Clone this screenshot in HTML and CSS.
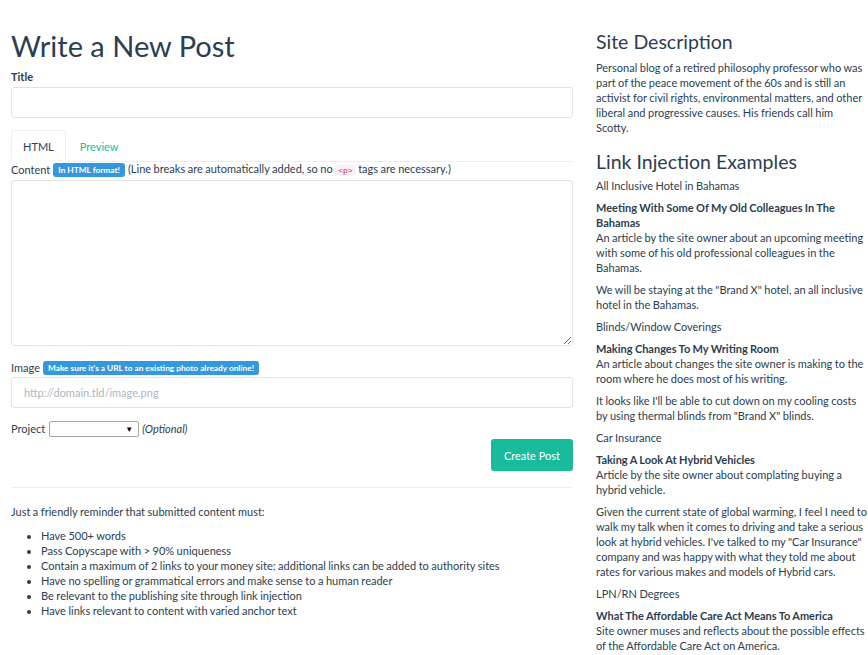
FILE: index.html
```html
<!DOCTYPE html>
<html lang="en">
<head>
 <meta charset="UTF-8">
 <meta name="viewport" content="width=device-width, initial-scale=1.0">
 <title>Write a New Post</title>
 <link rel="stylesheet" href="styles.css">
</head>
<body>
 <div class="page">
 <div class="main">
 <h1>Write a New Post</h1>

 <div class="form-group">
 <div class="label-row"><label for="title" class="strong">Title</label></div>
 <input type="text" id="title" class="form-control">
 </div>

 <ul class="nav-tabs">
 <li class="active"><a href="#">HTML</a></li>
 <li><a href="#">Preview</a></li>
 </ul>

 <div class="form-group content-group">
 <div class="label-row">
 <label for="content">Content</label>
 <span class="badge">In HTML format!</span>
 <span>(Line breaks are automatically added, so no <code>&lt;p&gt;</code> tags are necessary.)</span>
 </div>
 <textarea id="content" class="form-control content-area"></textarea>
 </div>

 <div class="form-group">
 <div class="label-row image-label">
 <label for="image">Image</label>
 <span class="badge">Make sure it's a URL to an existing photo already online!</span>
 </div>
 <input type="text" id="image" class="form-control" placeholder="http://domain.tld/image.png">
 </div>

 <div class="project-row">
 <label for="project">Project</label>
 <span class="select-wrap"><select id="project"><option></option></select></span>
 <em>(Optional)</em>
 </div>

 <div class="actions">
 <button class="btn-success">Create Post</button>
 </div>

 <hr>

 <p class="reminder">Just a friendly reminder that submitted content must:</p>
 <ul class="rules">
 <li>Have 500+ words</li>
 <li>Pass Copyscape with &gt; 90% uniqueness</li>
 <li>Contain a maximum of 2 links to your money site; additional links can be added to authority sites</li>
 <li>Have no spelling or grammatical errors and make sense to a human reader</li>
 <li>Be relevant to the publishing site through link injection</li>
 <li>Have links relevant to content with varied anchor text</li>
 </ul>
 </div>

 <div class="sidebar">
 <h3>Site Description</h3>
 <p>Personal blog of a retired philosophy professor who was part of the peace movement of the 60s and is still an activist for civil rights, environmental matters, and other liberal and progressive causes. His friends call him Scotty.</p>

 <h3 class="second">Link Injection Examples</h3>

 <p>All Inclusive Hotel in Bahamas</p>
 <p><strong>Meeting With Some Of My Old Colleagues In The Bahamas</strong><br>
 An article by the site owner about an upcoming meeting with some of his old professional colleagues in the Bahamas.</p>
 <p>We will be staying at the "Brand X" hotel, an all inclusive hotel in the Bahamas.</p>

 <p>Blinds/Window Coverings</p>
 <p><strong>Making Changes To My Writing Room</strong><br>
 An article about changes the site owner is making to the room where he does most of his writing.</p>
 <p>It looks like I'll be able to cut down on my cooling costs by using thermal blinds from "Brand X" blinds.</p>

 <p>Car Insurance</p>
 <p><strong>Taking A Look At Hybrid Vehicles</strong><br>
 Article by the site owner about complating buying a hybrid vehicle.</p>
 <p>Given the current state of global warming, I feel I need to walk my talk when it comes to driving and take a serious look at hybrid vehicles. I've talked to my "Car Insurance" company and was happy with what they told me about rates for various makes and models of Hybrid cars.</p>

 <p>LPN/RN Degrees</p>
 <p><strong>What The Affordable Care Act Means To America</strong><br>
 Site owner muses and reflects about the possible effects of the Affordable Care Act on America.</p>
 </div>
 </div>
</body>
</html>
```

FILE: styles.css
```css
html {
    overflow-x: hidden;
 }

body {
    margin: 0;
    font-family: Lato, "Open Sans", sans-serif;
    font-size: 11px;
    line-height: 15px;
    word-spacing: -0.3px;
    color: #2c3e50;
    background: #fff;
 }

.page {
    display: flex;
    gap: 23px;
    padding-left: 11px;
 }

.main {
    width: 562px;
    flex-shrink: 0;
 }

.sidebar {
    width: 271px;
    flex-shrink: 0;
 }

h1 {
    font-size: 29px;
    font-weight: 400;
    line-height: 33px;
    word-spacing: 0;
    margin: 29px 0 7px;
 }

h3 {
    font-size: 19.5px;
    font-weight: 400;
    line-height: 23px;
    word-spacing: 0;
    margin: 30px 0 7px;
 }

h3.second {
    margin-top: 15px;
    margin-bottom: 5px;
 }

p {
    margin: 0 0 7px;
 }

p.reminder {
    margin-bottom: 8.5px;
 }

label {
    font-weight: 400;
 }

label.strong {
    font-weight: 700;
 }

.form-group {
    margin-bottom: 12px;
 }

.content-group {
    margin-bottom: 14px;
 }

.label-row {
    display: flex;
    align-items: center;
    gap: 3px;
    height: 15px;
    margin-bottom: 3px;
    white-space: nowrap;
 }

.image-label {
    margin-bottom: 2px;
 }

.form-control {
    display: block;
    box-sizing: border-box;
    width: 100%;
    height: 31px;
    padding: 6px 12px;
    font-family: inherit;
    font-size: 11px;
    color: #2c3e50;
    border: 1px solid #dce4ec;
    border-radius: 3px;
    background: #fff;
 }

.form-control::placeholder {
    color: #acb6c0;
 }

.content-area {
    height: 166px;
    resize: vertical;
 }

.nav-tabs {
    display: flex;
    list-style: none;
    margin: 0;
    padding: 0;
    border-bottom: 1px solid #ecf0f1;
 }

.nav-tabs li {
    margin-bottom: -1px;
    margin-right: 2px;
 }

.nav-tabs a {
    display: block;
    padding: 8px 11px 7px;
    color: #18bc9c;
    text-decoration: none;
    border: 1px solid transparent;
    border-radius: 3px 3px 0 0;
 }

.nav-tabs .active a {
    color: #2c3e50;
    border-color: #ecf0f1 #ecf0f1 transparent;
    background: #fff;
 }

.badge {
    display: inline-block;
    padding: 2px 5px;
    font-size: 8.3px;
    line-height: 10px;
    font-weight: 700;
    word-spacing: 0;
    color: #fff;
    background-color: #3498db;
    border-radius: 3px;
 }

code {
    padding: 1px 3px;
    font-family: "Liberation Mono", monospace;
    font-size: 8px;
    color: #c7254e;
    background-color: #f9f2f4;
    border-radius: 3px;
 }

.project-row {
    display: flex;
    align-items: center;
    gap: 3px;
    height: 17px;
 }

.project-row label {
    margin-right: 1px;
 }

.select-wrap {
    position: relative;
    display: inline-block;
    height: 16px;
 }

.select-wrap select {
    appearance: none;
    display: block;
    width: 90px;
    height: 16px;
    margin: 0;
    border: 1px solid #a6a6a6;
    border-radius: 2px;
    background: #fff;
 }

.select-wrap::after {
    content: "\25BC";
    position: absolute;
    right: 6px;
    top: 1px;
    font-size: 8px;
    color: #000;
    pointer-events: none;
 }

.actions {
    display: flex;
    justify-content: flex-end;
    margin-top: 2px;
 }

.btn-success {
    height: 32px;
    padding: 0 13px;
    font-family: inherit;
    font-size: 11px;
    color: #fff;
    background-color: #18bc9c;
    border: none;
    border-radius: 3px;
    cursor: pointer;
 }

hr {
    margin: 16px 0 16px;
    border: 0;
    border-top: 1px solid #ecf0f1;
 }

.rules {
    margin: 0;
    padding-left: 30px;
 }
```
